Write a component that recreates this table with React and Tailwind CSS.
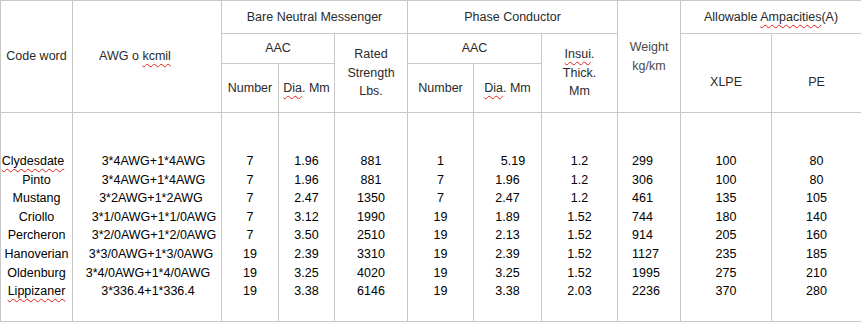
import React from 'react'

const rows = [
  ['Clydesdate', '3*4AWG+1*4AWG', '7', '1.96', '881', '1', '5.19', '1.2', '299', '100', '80'],
  ['Pinto', '3*4AWG+1*4AWG', '7', '1.96', '881', '7', '1.96', '1.2', '306', '100', '80'],
  ['Mustang', '3*2AWG+1*2AWG', '7', '2.47', '1350', '7', '2.47', '1.2', '461', '135', '105'],
  ['Criollo', '3*1/0AWG+1*1/0AWG', '7', '3.12', '1990', '19', '1.89', '1.52', '744', '180', '140'],
  ['Percheron', '3*2/0AWG+1*2/0AWG', '7', '3.50', '2510', '19', '2.13', '1.52', '914', '205', '160'],
  ['Hanoverian', '3*3/0AWG+1*3/0AWG', '19', '2.39', '3310', '19', '2.39', '1.52', '1127', '235', '185'],
  ['Oldenburg', '3*4/0AWG+1*4/0AWG', '19', '3.25', '4020', '19', '3.25', '1.52', '1995', '275', '210'],
  ['Lippizaner', '3*336.4+1*336.4', '19', '3.38', '6146', '19', '3.38', '2.03', '2236', '370', '280'],
]

// small per-line nudges seen in the source document (stray spaces)
const nudge = {
  0: ['pr-[7px]', '', '', '', '', '', '', ''],
  1: ['pl-[13px]', 'pl-[13px]', 'pl-[8px]', 'pl-[14px]', 'pl-[14px]', 'pl-[8px]', 'pl-[2px]', 'pl-[2px]'],
  6: ['pl-[11px]', '', '', '', '', '', '', ''],
}

const squiggle = 'underline decoration-wavy decoration-[#e0201a] decoration-1 underline-offset-[3px]'
const cell = 'border border-[#c8c8c8] p-0 text-center'

export default function App() {
  return (
    <div className="w-[861px] h-[322px] bg-white text-[12.5px] leading-[18.6px] text-[#2a2a2a] font-['Liberation_Sans',Arial,sans-serif]">
      <table className="table-fixed border-collapse w-[861px]">
        <colgroup>
          <col className="w-[72px]" />
          <col className="w-[149px]" />
          <col className="w-[57px]" />
          <col className="w-[56px]" />
          <col className="w-[73px]" />
          <col className="w-[66px]" />
          <col className="w-[68px]" />
          <col className="w-[76px]" />
          <col className="w-[63px]" />
          <col className="w-[91px]" />
          <col className="w-[90px]" />
        </colgroup>
        <tbody>
          <tr className="h-[33px]">
            <td rowSpan={3} className={cell}>Code word</td>
            <td rowSpan={3} className={cell}>
              <span className="pr-[24px]">
                AWG o <span className={squiggle}>kcmil</span>
              </span>
            </td>
            <td colSpan={3} className={cell}>Bare Neutral Messenger</td>
            <td colSpan={3} className={cell}>Phase Conductor</td>
            <td rowSpan={3} className={`${cell} text-[#4a4a4a]`}>
              Weight
              <br />
              kg/km
            </td>
            <td colSpan={2} className={cell}>
              Allowable <span className={squiggle}>Ampacities</span>(A)
            </td>
          </tr>
          <tr className="h-[30px]">
            <td colSpan={2} className={cell}>AAC</td>
            <td rowSpan={2} className={cell}>
              Rated
              <br />
              Strength
              <br />
              Lbs.
            </td>
            <td colSpan={2} className={cell}>AAC</td>
            <td rowSpan={2} className={cell}>
              <span className={squiggle}>Insui</span>.
              <br />
              Thick.
              <br />
              Mm
            </td>
            <td rowSpan={2} className={`${cell} pt-[18px]`}>XLPE</td>
            <td rowSpan={2} className={`${cell} pt-[18px]`}>PE</td>
          </tr>
          <tr className="h-[49px]">
            <td className={cell}>Number</td>
            <td className={cell}>
              <span className={squiggle}>Dia</span>. Mm
            </td>
            <td className={cell}>Number</td>
            <td className={cell}>
              <span className={squiggle}>Dia</span>. Mm
            </td>
          </tr>
          <tr className="h-[209px]">
            {rows[0].map((_, c) => (
              <td
                key={c}
                className={`border border-[#c8c8c8] p-0 align-top pt-[39px] text-black ${
                  c === 8 ? 'text-left pl-[14px]' : 'text-center'
                }`}
              >
                {rows.map((r, i) => (
                  <div key={i} className={nudge[c] ? nudge[c][i] : ''}>
                    {c === 0 && (i === 0 || i === 7) ? (
                      <span className={squiggle}>{r[c]}</span>
                    ) : (
                      r[c]
                    )}
                  </div>
                ))}
              </td>
            ))}
          </tr>
        </tbody>
      </table>
    </div>
  )
}
